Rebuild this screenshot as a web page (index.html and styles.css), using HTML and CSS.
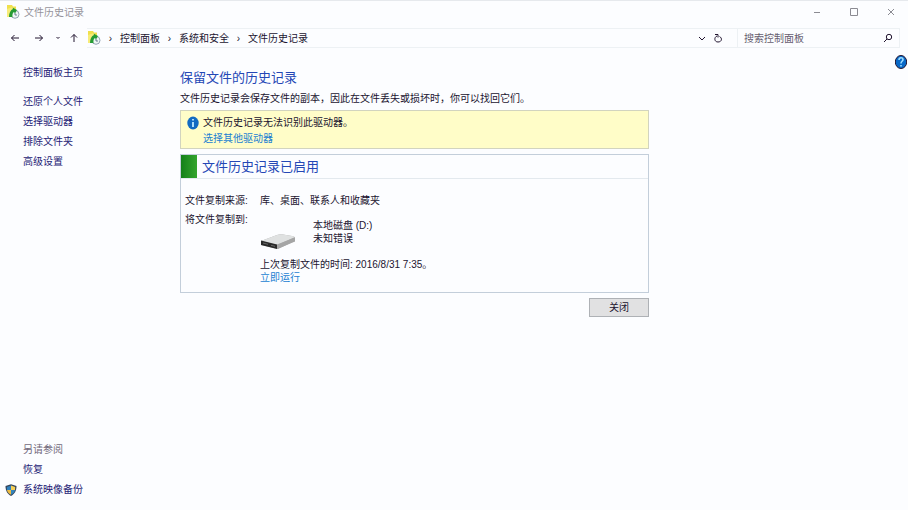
FILE: index.html
```html
<!DOCTYPE html>
<html lang="zh-CN">
<head>
<meta charset="utf-8">
<title>文件历史记录</title>
<link rel="stylesheet" href="styles.css">
</head>
<body>
<svg class="defs" aria-hidden="true">
  <symbol id="history" viewBox="0 0 14 14">
    <path d="M1 0h5l1 1.500h3V12H1z" fill="#f0e04c"/>
    <path d="M1 4l6-2v10H1z" fill="#f7ec78"/>
    <circle cx="9" cy="9.300" r="4" fill="#eef7f3" stroke="#8798aa" stroke-width=".9"/>
    <path d="M3 12C3 8 4.500 5 7 4l-.5-1.500L11 5 9 8.500 8 7C6.500 8 6.300 9.500 6.500 12z" fill="#259b35"/>
    <path d="M9 8v2h2" fill="none" stroke="#48637c" stroke-width=".8"/>
  </symbol>
</svg>
<header class="titlebar">
  <svg class="app-icon"><use href="#history"/></svg>
  <span class="title">文件历史记录</span>
  <button class="win" aria-label="最小化"><svg viewBox="0 0 10 10"><path d="M2 5.500h6"/></svg></button>
  <button class="win" aria-label="最大化"><svg viewBox="0 0 10 10"><path d="M1.500 1.500h7v7h-7z"/></svg></button>
  <button class="win" aria-label="关闭窗口"><svg viewBox="0 0 10 10"><path d="M2 2l6 6M8 2L2 8"/></svg></button>
</header>
<nav class="navbar" aria-label="导航">
  <div class="arrows">
    <button aria-label="后退"><svg viewBox="0 0 10 10"><path d="M9 5H1.500M4.500 2l-3 3 3 3"/></svg></button>
    <button aria-label="前进"><svg viewBox="0 0 10 10"><path d="M1 5h7.500M5.500 2l3 3-3 3"/></svg></button>
    <button class="small" aria-label="最近位置"><svg viewBox="0 0 10 10"><path d="M3.500 4L5 5.500 6.500 4"/></svg></button>
    <button aria-label="向上"><svg viewBox="0 0 10 10"><path d="M5 9V1.500M2 4.500l3-3 3 3"/></svg></button>
  </div>
  <div class="address">
    <svg class="app-icon"><use href="#history"/></svg>
    <span class="sep">›</span><a href="#">控制面板</a>
    <span class="sep">›</span><a href="#">系统和安全</a>
    <span class="sep">›</span><a href="#">文件历史记录</a>
    <button class="drop" aria-label="历史地址"><svg viewBox="0 0 10 10"><path d="M2 4l3 3 3-3"/></svg></button>
    <button class="refresh" aria-label="刷新"><svg viewBox="0 0 10 10"><path d="M2 1.500h3v3M4 3C1 4 1 9 5 9s4.500-4 1.500-5.500"/></svg></button>
  </div>
  <form class="search">
    <input type="text" aria-label="搜索控制面板" placeholder="搜索控制面板">
    <button type="button" aria-label="搜索"><svg viewBox="0 0 10 10"><circle cx="6" cy="4" r="2.700"/><path d="M4 6L1 9"/></svg></button>
  </form>
</nav>
<div class="body">
  <aside class="sidebar">
    <a class="home" href="#">控制面板主页</a>
    <a href="#">还原个人文件</a>
    <a href="#">选择驱动器</a>
    <a href="#">排除文件夹</a>
    <a href="#">高级设置</a>
    <div class="also">
      <span>另请参阅</span>
      <a href="#">恢复</a>
      <a class="shielded" href="#"><svg viewBox="0 0 12 12"><path d="M6 .2l5.500 1.800C11.500 7 9.500 10 6 12 2.500 10 .5 7 .5 2z" fill="#35455a"/><path d="M6 1.500V6H2L1.800 3z" fill="#2f80bd"/><path d="M6 1.500l4.200 1.500L10 6H6z" fill="#f5ce55"/><path d="M2 6h4v4.800C3.600 9.500 2.400 8 2 6z" fill="#efbd41"/><path d="M6 6h4c-.4 2-1.600 3.500-4 4.800z" fill="#3485bd"/></svg>系统映像备份</a>
    </div>
  </aside>
  <main>
    <h1>保留文件的历史记录</h1>
    <p class="intro">文件历史记录会保存文件的副本，因此在文件丢失或损坏时，你可以找回它们。</p>
    <section class="notice">
      <svg class="info" viewBox="0 0 12 14"><ellipse cx="6" cy="7" rx="5.700" ry="6.500" fill="#126bc2"/><path d="M6 3v1.500M6 6v5" stroke="#bde9ff" stroke-width="1.800"/></svg>
      <div><p>文件历史记录无法识别此驱动器。</p><a href="#">选择其他驱动器</a></div>
    </section>
    <section class="panel">
      <div class="status"><span class="green"></span><h2>文件历史记录已启用</h2></div>
      <dl>
        <dt>文件复制来源:</dt>
        <dd>库、桌面、联系人和收藏夹</dd>
        <dt>将文件复制到:</dt>
        <dd>
          <div class="drive">
            <svg viewBox="0 0 36 18"><path d="M1 8L17 2q3-1 6-.6l9 1.600q3 .5 3 2v3L18 16 1 12z" fill="#aaa"/><path d="M1 8L17 2q3-1 6-.6l9 1.600q3 .5 2 1.500L17 12z" fill="#dfe1e1"/><path d="M1 7.500l16 4V16L1 12z" fill="#292929"/><path d="M17 11.500l18-7v4L17 16z" fill="#a5a5a5"/><path d="M3 10l5 1.300M11 12.300l4 1" stroke="#666"/></svg>
            <div>本地磁盘 (D:)<br>未知错误</div>
          </div>
          <p>上次复制文件的时间: 2016/8/31 7:35。</p>
          <a href="#">立即运行</a>
        </dd>
      </dl>
    </section>
    <div class="actions"><button>关闭</button></div>
  </main>
  <button class="help" aria-label="帮助"><svg viewBox="0 0 12 14"><ellipse cx="6" cy="7" rx="5.700" ry="6.500" fill="#0869c8"/><path d="M4 5c0-3 4-3 4-.5C8 6.500 6 6 6 8.500M6 10v1.500" fill="none" stroke="#9bdcff" stroke-width="1.600"/></svg></button>
</div>
</body>
</html>
```

FILE: styles.css
```css
* { box-sizing: border-box; }
body {
  margin: 0;
  min-height: 100vh;
  display: flex;
  flex-direction: column;
  background: #fcfdff;
  border-top: 1px solid #e6e9ed;
  color: #21142f;
  font: 10px/13px "Liberation Sans", "Noto Sans CJK SC", sans-serif;
}
h1, h2, p, dl, dd { margin: 0; }
a { color: #251b75; text-decoration: none; }
button { border: 0; padding: 0; background: none; font: inherit; color: inherit; }
button svg { display: block; width: 10px; height: 10px; fill: none; stroke: currentColor; }
.defs { position: absolute; width: 0; height: 0; }
.app-icon { width: 14px; height: 14px; flex: none; }
.titlebar { display: flex; align-items: center; height: 22px; padding: 0 12px 0 6px; }
.title { margin: 0 auto 0 4px; color: #96939b; }
.win { margin-left: 27px; color: #8b8b92; }
.navbar { display: flex; align-items: center; height: 30px; padding: 0 8px 0 0; }
.arrows { display: flex; width: 87px; padding-left: 10px; gap: 14px; }
.arrows .small { margin: 0 -8px 0 -5px; }
.address {
  flex: 1;
  display: flex;
  align-items: center;
  height: 20px;
  border: solid #edf1f4;
  border-width: 1px 0;
}
.address a { color: #21142f; }
.sep { width: 19px; text-align: center; }
.address .drop { margin-left: auto; }
.refresh { margin: 0 14px 0 6px; }
.search {
  display: flex;
  align-items: center;
  width: 163px;
  height: 20px;
  padding: 0 6px;
  border: 1px solid #edf1f4;
}
.search input {
  flex: 1;
  min-width: 0;
  border: 0;
  padding: 0;
  background: none;
  font: inherit;
}
.search input::placeholder { color: #675e70; opacity: 1; }
.body { flex: 1; display: flex; }
.sidebar {
  width: 180px;
  display: flex;
  flex-direction: column;
  padding: 13px 0 14px 23px;
  gap: 7px;
}
.home { margin-bottom: 9px; }
.also { display: flex; flex-direction: column; gap: 7px; margin-top: auto; }
.also span { color: #71697b; }
.shielded { display: flex; align-items: center; gap: 6px; margin-left: -18px; }
.shielded svg { width: 12px; height: 12px; }
main { flex: 0 1 469px; padding-top: 16px; }
h1, h2 { font-size: 13px; line-height: 18px; font-weight: 400; color: #2447b5; }
.intro { margin: 5px 0; white-space: nowrap; }
.notice {
  display: flex;
  gap: 4px;
  padding: 5px 6px;
  height: 39px;
  border: 1px solid #d2d4bf;
  background: #fffdc8;
}
.info { width: 12px; height: 14px; }
.notice a, dd a { color: #237fd2; }
.notice div { display: flex; flex-direction: column; gap: 3px; }
.panel { margin-top: 5px; border: 1px solid #c3ceda; }
.status { display: flex; gap: 5px; height: 24px; align-items: center; border-bottom: 1px solid #e3e9ee; }
.green { width: 16px; height: 23px; background: linear-gradient(90deg, #148019, #34a52d); }
dl { display: grid; grid-template-columns: 75px 1fr; row-gap: 6px; padding: 15px 4px 8px; }
.drive { display: flex; align-items: flex-end; gap: 17px; margin: 6px 0 13px; }
.drive svg { width: 36px; height: 18px; margin-bottom: -6px; }
.actions { display: flex; justify-content: flex-end; margin-top: 5px; }
.actions button { width: 60px; height: 19px; border: 1px solid #aeb1b5; background: #e1e1e2; }
.help { align-self: flex-start; margin: 2px 1px 0 auto; }
.help svg { width: 12px; height: 14px; }
```
